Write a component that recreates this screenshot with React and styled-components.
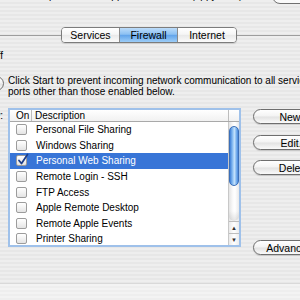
import React from 'react';
import styled, { createGlobalStyle } from 'styled-components';

const GlobalStyle = createGlobalStyle`
  html, body { margin: 0; padding: 0; }
  body { font-family: "Liberation Sans", Arial, sans-serif; color: #000; }
`;

const pinstripe = 'repeating-linear-gradient(to bottom, #eeeeee 0px, #eeeeee 2px, #e7e7e7 2px, #e7e7e7 4px)';

const Window = styled.div`
  width: 300px;
  height: 300px;
  overflow: hidden;
  display: flex;
  flex-direction: column;
  background: ${pinstripe};
`;

const TopStrip = styled.div`
  height: 4px;
  overflow: hidden;
  display: flex;
  align-items: flex-end;
`;

const Caption = styled.div`
  font-size: 10px;
  line-height: 12px;
  margin-left: 28px;
  margin-bottom: 2px;
  white-space: nowrap;
`;

const CornerButton = styled.div`
  margin-left: auto;
  margin-right: -30px;
  width: 56px;
  height: 14px;
  flex: none;
  border: 1px solid #707070;
  border-radius: 8px;
  background: #fafafa;
`;

const TabRow = styled.div`
  margin-top: 23px;
  display: flex;
  align-items: center;
  height: 16px;
`;

const Rule = styled.div`
  height: 1px;
  background: #9d9d9d;
  flex: ${p => (p.$grow ? 1 : 'none')};
  width: ${p => (p.$grow ? 'auto' : '61px')};
`;

const Segmented = styled.div`
  display: flex;
  height: 16px;
  box-sizing: border-box;
  border: 1px solid #7c7c7c;
  border-radius: 4px;
  overflow: hidden;
  box-shadow: 0 1px 1px rgba(0, 0, 0, 0.12);
`;

const Tab = styled.div`
  width: ${p => p.$w}px;
  display: flex;
  align-items: center;
  justify-content: center;
  font-size: 10.5px;
  border-left: ${p => (p.$first ? 'none' : '1px solid #8a8a8a')};
  background: ${p =>
    p.$active
      ? 'linear-gradient(to bottom, #bcdcfa 0%, #8cc0f2 45%, #62a4ea 52%, #9ccdf8 100%)'
      : 'linear-gradient(to bottom, #ffffff 0%, #f6f6f6 45%, #e9e9e9 52%, #fbfbfb 100%)'};
`;

const Content = styled.div`
  margin-left: -75px;
  display: flex;
  flex-direction: column;
`;

const Row = styled.div`
  display: flex;
  align-items: flex-start;
  margin-top: ${p => p.$top}px;
`;

const LabelCol = styled.div`
  width: 78px;
  flex: none;
  display: flex;
  justify-content: flex-end;
  margin-right: 5px;
  font-size: 10px;
  line-height: 12px;
  padding-top: ${p => p.$pad || 0}px;
`;

const StartButton = styled.div`
  width: 54px;
  height: 15px;
  margin-top: 1px;
  margin-right: -1px;
  box-sizing: border-box;
  border: 1px solid #6e6e6e;
  border-radius: 8px;
  font-size: 10.5px;
  display: flex;
  align-items: center;
  justify-content: center;
  background: linear-gradient(to bottom, #ffffff 0%, #f3f3f3 48%, #e2e2e2 52%, #fafafa 100%);
`;

const Note = styled.div`
  font-size: 10px;
  line-height: 11px;
  white-space: nowrap;
`;

const TableFrame = styled.div`
  width: 233px;
  height: 139px;
  flex: none;
  box-sizing: border-box;
  border: 2px solid #9fc1ea;
  background: #fff;
  overflow: hidden;
  display: flex;
  flex-direction: column;
`;

const Header = styled.div`
  height: 11px;
  flex: none;
  display: flex;
  border-bottom: 1px solid #a9a9a9;
  background: linear-gradient(to bottom, #ffffff, #f1f1f1);
  font-size: 10px;
  line-height: 11px;
`;

const HeadCell = styled.div`
  width: ${p => (p.$w ? `${p.$w}px` : 'auto')};
  flex: ${p => (p.$w ? 'none' : 1)};
  padding-left: ${p => p.$pad}px;
  box-sizing: border-box;
  border-right: ${p => (p.$line ? '1px solid #bdbdbd' : 'none')};
`;

const TableBody = styled.div`
  flex: 1;
  display: flex;
  min-height: 0;
`;

const List = styled.div`
  flex: 1;
  display: flex;
  flex-direction: column;
`;

const Item = styled.div`
  height: 15.6px;
  flex: none;
  display: flex;
  align-items: center;
  font-size: 10px;
  background: ${p => (p.$selected ? '#3875d7' : 'transparent')};
  color: ${p => (p.$selected ? '#fff' : '#000')};
`;

const Check = styled.div`
  width: 11px;
  height: 11px;
  margin: 0 9px 0 6px;
  box-sizing: border-box;
  border: 1px solid #9c9c9c;
  border-radius: 2px;
  background: linear-gradient(to bottom, #ffffff, #f2f2f2 50%, #e4e4e4 100%);
  position: relative;
  flex: none;

  svg {
    position: absolute;
    left: 0;
    top: -3px;
  }
`;

const Scrollbar = styled.div`
  width: 10px;
  flex: none;
  display: flex;
  flex-direction: column;
  border-left: 1px solid #c8c8c8;
  background: linear-gradient(to right, #e4e4e4, #fbfbfb 40%, #ffffff 60%, #e9e9e9);
`;

const Track = styled.div`
  flex: 1;
  display: flex;
  flex-direction: column;
  padding-top: 4px;
`;

const Thumb = styled.div`
  height: 60px;
  border-radius: 5px;
  border: 1px solid #3b6fb8;
  box-sizing: border-box;
  background: linear-gradient(to right, #3f80d8 0%, #8fc2f4 35%, #c4e2fc 55%, #6aa6ea 85%, #4a88dc 100%);
`;

const TrackEnd = styled.div`
  margin-top: auto;
  height: 10px;
  border-radius: 0 0 5px 5px;
  background: linear-gradient(to bottom, rgba(0,0,0,0), rgba(0,0,0,0.1));
`;

const Arrow = styled.div`
  height: 11px;
  flex: none;
  border-top: 1px solid #bdbdbd;
  display: flex;
  align-items: center;
  justify-content: center;
  font-size: 6px;
  color: #333;
  background: linear-gradient(to right, #eaeaea, #ffffff 50%, #ececec);
`;

const ButtonCol = styled.div`
  margin-left: 12px;
  display: flex;
  flex-direction: column;
  padding-top: 1px;
`;

const PushButton = styled.div`
  width: 82px;
  height: 15px;
  flex: none;
  margin-top: ${p => p.$top || 0}px;
  box-sizing: border-box;
  border: 1px solid #6e6e6e;
  border-radius: 8px;
  font-size: 10.5px;
  display: flex;
  align-items: center;
  justify-content: center;
  background: linear-gradient(to bottom, #ffffff 0%, #f3f3f3 48%, #e2e2e2 52%, #fafafa 100%);
  box-shadow: 0 1px 1px rgba(0, 0, 0, 0.15);
`;

const BottomBar = styled.div`
  margin-top: auto;
  height: 16px;
  border-top: 1px solid #d9d9d9;
  background: repeating-linear-gradient(to bottom, #f3f3f3 0px, #f3f3f3 2px, #eeeeee 2px, #eeeeee 4px);
`;

const services = [
  { name: 'Personal File Sharing' },
  { name: 'Windows Sharing' },
  { name: 'Personal Web Sharing', on: true },
  { name: 'Remote Login - SSH' },
  { name: 'FTP Access' },
  { name: 'Apple Remote Desktop' },
  { name: 'Remote Apple Events' },
  { name: 'Printer Sharing' },
];

function CheckMark() {
  return (
    <svg width="12" height="13" viewBox="0 0 12 13">
      <path d="M2 7.5 L4.5 10.5 L10.5 1.5" fill="none" stroke="#1d3f8a" strokeWidth="1.8" strokeLinecap="round" strokeLinejoin="round" />
    </svg>
  );
}

export default function App() {
  return (
    <>
      <GlobalStyle />
      <Window>
        <TopStrip>
          <Caption>Computer name: Apple Rendezvous (appy.local)</Caption>
          <CornerButton />
        </TopStrip>

        <TabRow>
          <Rule />
          <Segmented>
            <Tab $w={57} $first>Services</Tab>
            <Tab $w={57} $active>Firewall</Tab>
            <Tab $w={58}>Internet</Tab>
          </Segmented>
          <Rule $grow />
        </TabRow>

        <Content>
          <Row $top={7}>
            <LabelCol>Firewall Off</LabelCol>
          </Row>

          <Row $top={13}>
            <LabelCol>
              <StartButton>Start</StartButton>
            </LabelCol>
            <Note>
              Click Start to prevent incoming network communication to all services and
              <br />
              ports other than those enabled below.
            </Note>
          </Row>

          <Row $top={11}>
            <LabelCol $pad={2}>Allow:</LabelCol>
            <TableFrame>
              <Header>
                <HeadCell $w={22} $pad={6} $line>On</HeadCell>
                <HeadCell $pad={3} $line>Description</HeadCell>
                <HeadCell $w={10} $pad={0} />
              </Header>
              <TableBody>
                <List>
                  {services.map(s => (
                    <Item key={s.name} $selected={s.on}>
                      <Check>{s.on && <CheckMark />}</Check>
                      {s.name}
                    </Item>
                  ))}
                </List>
                <Scrollbar>
                  <Track>
                    <Thumb />
                    <TrackEnd />
                  </Track>
                  <Arrow>▲</Arrow>
                  <Arrow>▼</Arrow>
                </Scrollbar>
              </TableBody>
            </TableFrame>
            <ButtonCol>
              <PushButton>New...</PushButton>
              <PushButton $top={11}>Edit...</PushButton>
              <PushButton $top={10}>Delete</PushButton>
              <PushButton $top={65}>Advanced...</PushButton>
            </ButtonCol>
          </Row>
        </Content>

        <BottomBar />
      </Window>
    </>
  );
}
